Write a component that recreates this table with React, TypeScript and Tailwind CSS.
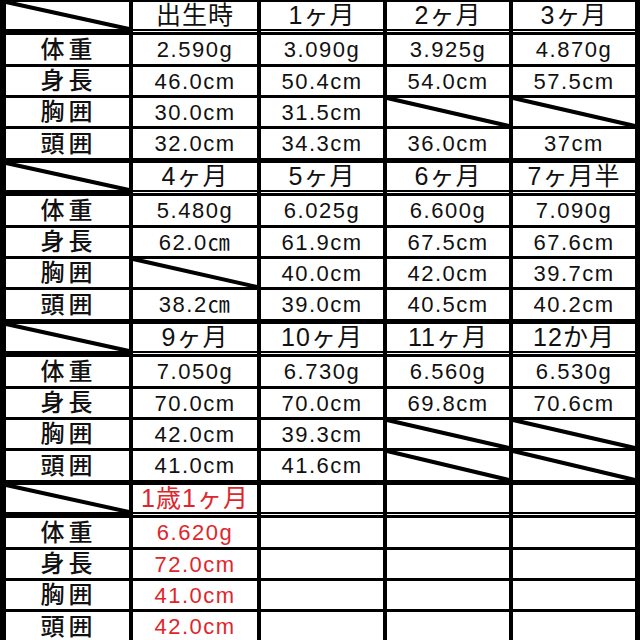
type Cell = string | null;

type Block = {
  headers: string[];
  rows: Cell[][];
  red?: boolean;
};

const labels = ["体重", "身長", "胸囲", "頭囲"];
const rowHeights = ["h-[29px]", "h-[28px]", "h-[28px]", "h-[29px]"];

const blocks: Block[] = [
  {
    headers: ["出生時", "1ヶ月", "2ヶ月", "3ヶ月"],
    rows: [
      ["2.590g", "3.090g", "3.925g", "4.870g"],
      ["46.0cm", "50.4cm", "54.0cm", "57.5cm"],
      ["30.0cm", "31.5cm", null, null],
      ["32.0cm", "34.3cm", "36.0cm", "37cm"],
    ],
  },
  {
    headers: ["4ヶ月", "5ヶ月", "6ヶ月", "7ヶ月半"],
    rows: [
      ["5.480g", "6.025g", "6.600g", "7.090g"],
      ["62.0㎝", "61.9cm", "67.5cm", "67.6cm"],
      [null, "40.0cm", "42.0cm", "39.7cm"],
      ["38.2㎝", "39.0cm", "40.5cm", "40.2cm"],
    ],
  },
  {
    headers: ["9ヶ月", "10ヶ月", "11ヶ月", "12か月"],
    rows: [
      ["7.050g", "6.730g", "6.560g", "6.530g"],
      ["70.0cm", "70.0cm", "69.8cm", "70.6cm"],
      ["42.0cm", "39.3cm", null, null],
      ["41.0cm", "41.6cm", null, null],
    ],
  },
  {
    headers: ["1歳1ヶ月", "", "", ""],
    rows: [
      ["6.620g", "", "", ""],
      ["72.0cm", "", "", ""],
      ["41.0cm", "", "", ""],
      ["42.0cm", "", "", ""],
    ],
    red: true,
  },
];

const font = {
  fontFamily: '"Liberation Sans", "Noto Sans CJK JP", sans-serif',
};

function Slash() {
  return (
    <svg
      className="absolute inset-0 h-full w-full overflow-visible"
      viewBox="0 0 100 100"
      preserveAspectRatio="none"
    >
      <line
        x1="0"
        y1="0"
        x2="100"
        y2="100"
        stroke="#000"
        strokeWidth="4"
        vectorEffect="non-scaling-stroke"
      />
    </svg>
  );
}

function TableBlock({ block }: { block: Block }) {
  const grid =
    "grid grid-cols-[123px_124px_122px_122px_122px] gap-x-[4px]";
  return (
    <div className="flex flex-col gap-y-[3px]">
      <div className={grid}>
        <div className="relative h-[27px] bg-white">
          <Slash />
        </div>
        {block.headers.map((h, i) => (
          <div key={i} className="flex h-[30px] flex-col">
            <div
              className={`flex h-[27px] items-center justify-center bg-white text-[25px] leading-none tracking-[1px] ${
                block.red && i === 0 ? "text-[#e0262b]" : "text-[#111]"
              }`}
            >
              {h}
            </div>
            <div className="h-[2px]" />
            <div className="h-[1px] bg-white" />
          </div>
        ))}
      </div>
      {block.rows.map((row, r) => (
        <div key={r} className={`${grid} ${rowHeights[r]}`}>
          <div className="flex items-center justify-center bg-white pl-[2px] text-[24px] font-medium leading-none tracking-[4px] text-[#111]">
            {labels[r]}
          </div>
          {row.map((v, i) => (
            <div
              key={i}
              className={`relative flex items-center justify-center bg-white pt-[1px] text-[22px] leading-none tracking-[1.5px] ${
                block.red ? "text-[#e0262b]" : "text-[#111]"
              }`}
            >
              {v === null ? <Slash /> : v}
            </div>
          ))}
        </div>
      ))}
    </div>
  );
}

export default function App() {
  return (
    <div
      className="flex h-[640px] w-[640px] flex-col gap-y-[5px] bg-black pb-[3px] pl-[6px] pr-[5px] pt-[2px]"
      style={font}
    >
      {blocks.map((b, i) => (
        <TableBlock key={i} block={b} />
      ))}
    </div>
  );
}
